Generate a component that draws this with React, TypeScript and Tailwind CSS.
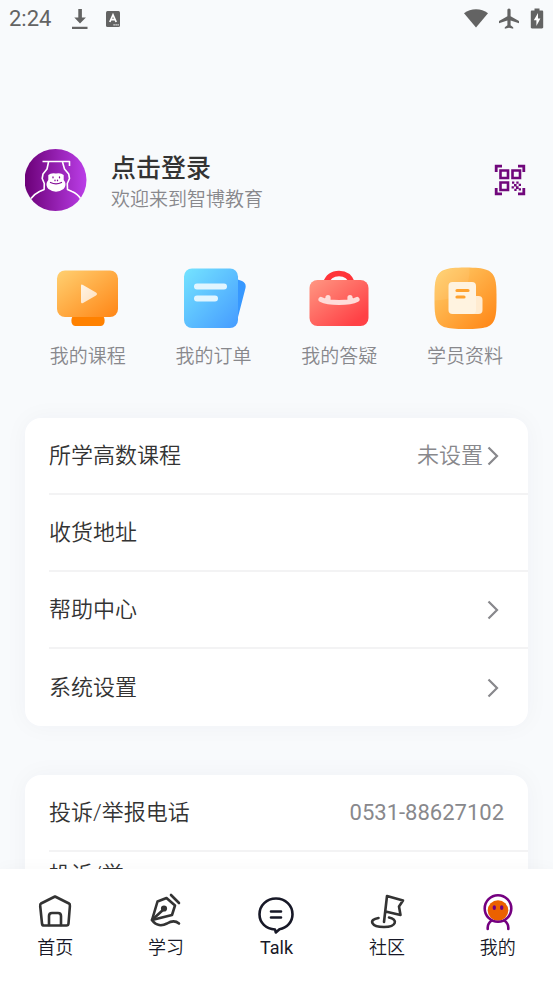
import type { ReactNode } from "react";

function StatusBar() {
  return (
    <header className="flex h-[37px] items-center justify-between px-[9px] text-[#636363]">
      <div className="flex items-center gap-5">
        <span className="font-[Roboto] text-[22px] leading-6">2:24</span>
        <div className="flex items-center gap-4">
          <svg width="18" height="22" viewBox="0 0 18 22" fill="currentColor" aria-hidden="true">
            <path d="M7.300 1h3.600v8.500h4L9 15.500 3.300 9.500h4zM1 18.700h15.500v2.200H1z" />
          </svg>
          <svg width="16" height="18" viewBox="0 0 16 18" aria-hidden="true">
            <rect x="1" y="1" width="14" height="16" rx="1.500" fill="currentColor" />
            <path d="M4.800 12 8 4.800 11.200 12M6 9.700h4" fill="none" stroke="#fff" strokeWidth="1.700" />
            <path d="M8.500 14.800h1.200m.8 0h1.200m.8 0h1.200" stroke="#fff" strokeWidth="1.200" />
          </svg>
        </div>
      </div>
      <div className="flex items-center gap-[9px]">
        <svg width="26" height="20" viewBox="0 0 26 20" fill="currentColor" aria-hidden="true">
          <path d="M12 18.500 0 4.200C3.500 1.500 7.500.3 12 .3S20.500 1.500 24 4.200z" />
        </svg>
        <svg width="22" height="22" viewBox="0 0 22 22" fill="currentColor" aria-hidden="true">
          <path d="M10 .5c1 0 1.600.8 1.600 1.700v6L20 13v2.200l-8.400-2.600v4.700l2.600 1.900v1.600L10 19.700l-4.200 1.100v-1.600l2.600-1.900v-4.700L0 15.200V13l8.400-4.800v-6C8.400 1.300 9 .5 10 .5z" />
        </svg>
        <svg width="14" height="22" viewBox="0 0 14 22" aria-hidden="true">
          <path d="M4.500.5h5v2H12c.7 0 1.200.5 1.200 1.200v15.600c0 .7-.5 1.200-1.200 1.200H2c-.7 0-1.200-.5-1.200-1.200V3.700C.8 3 1.300 2.500 2 2.500h2.500z" fill="currentColor" />
          <path d="M8 5 3.800 12.300h2.600V18l4-7.500H8z" fill="#fff" />
        </svg>
      </div>
    </header>
  );
}

function Avatar() {
  return (
    <svg className="size-[62px] shrink-0" viewBox="0 0 62 62" aria-hidden="true">
      <defs>
        <linearGradient id="avatar" x1="0" y1="0" x2="1" y2="0">
          <stop offset="0" stopColor="#6b0077" />
          <stop offset="1" stopColor="#bb3ee8" />
        </linearGradient>
      </defs>
      <circle cx="30.500" cy="31" r="31" fill="url(#avatar)" />
      <g fill="none" stroke="#fff" strokeWidth="1.600" strokeLinejoin="round">
        <path d="M17.500 12.500H44.500v4.500M23.500 13l-1.500 7-4 5-.8 4.500 2.100 5-.2 6L14.500 42.500C10.500 44.500 8 46.500 6 49.500" />
        <path d="M37.500 13l2 7 4.200 5 .8 4.500-2.200 5 .2 6 4.500 2c4 1.500 6.500 3.800 8.500 7" />
      </g>
      <path d="M23.300 26q2.700-2.500 7.700-1.500 5-1 7.700 1.500v5c2.600 3 2.200 6.500-.2 9q-7.500 5.500-15 0c-2.400-2.500-2.800-6-.2-9z" fill="#fff" />
      <g fill="none" stroke="#850d98" strokeWidth="1.300" strokeLinecap="round">
        <path d="M28 28v.8M34.500 28v.8M30 31.200v.5M32.500 31.200v.5M25.500 33.500q5.500 2.600 11 0" />
      </g>
    </svg>
  );
}

function QrIcon() {
  return (
    <svg width="32" height="32" viewBox="0 0 32 32" fill="none" stroke="#70077b" strokeWidth="2.800" aria-hidden="true">
      <path d="M2.200 8V2.200H8M24 2.200h5.800V8M2.200 24v5.800H8M24 29.800h5.800V24" />
      <path d="M6.500 6.500H14V14H6.500zM18.500 6.500H26V14h-7.500zM6.500 18.500H14V26H6.500z" strokeWidth="2.600" />
      <path d="M18 17.500h2.300v2.300H18zM22.300 17.500h2.300v2.300h-2.300zM24.700 19.800H27v2.300h-2.300zM20 20h2.600v2.600H20zM22 22.300h2.600v2.600H22zM17.600 22.300h2.300v2.300h-2.300zM24.700 24.300H27v2.300h-2.300zM20.300 24.700h2.300V27h-2.300z" fill="#70077b" stroke="none" />
    </svg>
  );
}

function CourseIcon() {
  return (
    <svg className="size-16" viewBox="0 0 64 64" aria-hidden="true">
      <defs>
        <linearGradient id="course" x1="0" y1="0" x2="1" y2="1">
          <stop offset="0" stopColor="#ffd071" />
          <stop offset="1" stopColor="#ff8515" />
        </linearGradient>
        <linearGradient id="play" x1="0" y1="0" x2="1" y2="1">
          <stop offset="0" stopColor="#fff4e5" />
          <stop offset="1" stopColor="#ffe0bd" />
        </linearGradient>
      </defs>
      <path d="M18 49h28l1.500 1.500c2 3 1.500 9.500-3 9.500h-25c-4.500 0-5-6.500-3-9.500z" fill="#ff8100" />
      <rect x="1" y="4.500" width="61" height="46.500" rx="8" fill="url(#course)" />
      <path d="M27 19 40 26.500q2 1.500 0 3L27 37q-2 1-2-1.200v-16q0-2 2-.8z" fill="url(#play)" />
    </svg>
  );
}

function OrderIcon() {
  return (
    <svg className="size-16" viewBox="0 0 64 64" aria-hidden="true">
      <defs>
        <linearGradient id="order" x1="0" y1="0" x2="1" y2="1">
          <stop offset="0.050" stopColor="#72e0ff" />
          <stop offset="1" stopColor="#459bff" />
        </linearGradient>
      </defs>
      <path d="M53 12.500 60 15q4.500 2 3.500 7l-8 31q-1 4-5 6z" fill="#3798ff" />
      <rect x="2" y="2.500" width="54" height="59.500" rx="8" fill="url(#order)" />
      <path d="M15 20.500h27M15 32.500h18" stroke="#e1f5ff" strokeWidth="6" strokeLinecap="round" />
    </svg>
  );
}

function AnswerIcon() {
  return (
    <svg className="size-16" viewBox="0 0 64 64" aria-hidden="true">
      <defs>
        <linearGradient id="answer" x1="0" y1="0" x2="1" y2="1">
          <stop offset="0" stopColor="#ff9883" />
          <stop offset="0.850" stopColor="#ff4146" />
        </linearGradient>
      </defs>
      <path d="M18.500 17.500Q22 7.500 32 7.500t13.500 10" fill="none" stroke="#ff3439" strokeWidth="5.500" />
      <rect x="2.500" y="14" width="59" height="46" rx="8" fill="url(#answer)" />
      <path d="M14 33.500q6 3 18 3t18-3M21 31.500V34M43 31.500V34" fill="none" stroke="#ffdcd9" strokeWidth="5.200" strokeLinecap="round" />
    </svg>
  );
}

function ProfileIcon() {
  return (
    <svg className="size-16" viewBox="0 0 64 64" aria-hidden="true">
      <defs>
        <linearGradient id="profile" x1="0" y1="0" x2="1" y2="1">
          <stop offset="0" stopColor="#ffd26f" />
          <stop offset="1" stopColor="#ff8312" />
        </linearGradient>
      </defs>
      <path d="M32.500 1.500c21 0 25 3 28 8s3 14 3 23 0 18-3 23-7 7.500-28 7.500-25-2.500-28-7.500-3-14-3-23 0-18 3-23 7-8 28-8z" fill="url(#profile)" />
      <path d="M1.500 34.500q37-1 35-33Q12 .5 5 9q-3.500 5-3.500 25.500z" fill="#fff" opacity="0.080" />
      <path d="M42 30h3.500q4 0 4 4v10q0 4-4 4h-9.500z" fill="#ffebd0" />
      <rect x="15.500" y="16" width="27.500" height="32" rx="4" fill="#fff3e0" />
      <path d="M24 24.500H35M24 31H31" stroke="#ffa22e" strokeWidth="3.200" strokeLinecap="round" />
    </svg>
  );
}

function Chevron() {
  return (
    <svg width="12" height="20" viewBox="0 0 12 20" fill="none" stroke="#88888c" strokeWidth="2.200" aria-hidden="true">
      <path d="M1.500 1.500 10 10l-8.500 8.500" />
    </svg>
  );
}

const shortcuts: { label: string; icon: ReactNode }[] = [
  { label: "我的课程", icon: <CourseIcon /> },
  { label: "我的订单", icon: <OrderIcon /> },
  { label: "我的答疑", icon: <AnswerIcon /> },
  { label: "学员资料", icon: <ProfileIcon /> },
];

const settings = [
  { label: "所学高数课程", value: "未设置", arrow: true },
  { label: "收货地址", value: "", arrow: false },
  { label: "帮助中心", value: "", arrow: true },
  { label: "系统设置", value: "", arrow: true },
];

function NavSvg({ children }: { children: ReactNode }) {
  return (
    <svg className="size-10 overflow-visible" viewBox="0 0 40 40" fill="none" stroke="#333" strokeWidth="2.600" strokeLinecap="round" strokeLinejoin="round" aria-hidden="true">
      {children}
    </svg>
  );
}

const tabs: { label: string; icon: ReactNode; latin?: boolean }[] = [
  {
    label: "首页",
    icon: (
      <NavSvg>
        <path d="M20 5.500 34 12.500Q35 13 34.900 15L33.500 32.500q-.2 2-2 2H9q-1.800 0-2-2L5.200 15q-.2-2 .8-2.500z" />
        <path d="M14 34V25q0-3 3-3h6q3 0 3 3v9" />
      </NavSvg>
    ),
  },
  {
    label: "学习",
    icon: (
      <NavSvg>
        <path d="M6 29 11.500 10.500 20.500 7 29 14.500 26 24z" />
        <path d="M6 29 18 18M25 4l8 8M6 29c4 6 10 6 15 3.500 5-3 9-2.500 12 0" />
        <circle cx="18" cy="17.500" r="1.800" fill="#333" />
      </NavSvg>
    ),
  },
  {
    label: "Talk",
    latin: true,
    icon: (
      <NavSvg>
        <g stroke="#171827">
          <path d="M20 7.500C10.500 7.500 3.500 14.500 3.500 23.300c0 8.500 6.500 14.700 15.500 15.200l.8 3 3.700-3.300c7.500-1.200 13-7.200 13-14.900C36.500 14.500 29.500 7.500 20 7.500z" />
          <path d="M15 20.500h10M15 26.500h10" />
        </g>
      </NavSvg>
    ),
  },
  {
    label: "社区",
    icon: (
      <NavSvg>
        <path d="M17 31 20 5l16 4.500-4 6 1.500 8.500-15-3.500M11.500 27C1 28.500 4 36 17 36s14-8 5-9.500" />
      </NavSvg>
    ),
  },
  {
    label: "我的",
    icon: (
      <NavSvg>
        <circle cx="20" cy="19.500" r="10.300" fill="#eb6100" stroke="none" />
        <g stroke="#740080">
          <circle cx="20" cy="17.500" r="13.300" />
          <path d="M9.700 38v-1.500q0-4 4-7M30.300 38v-1.500q0-4-4-7" />
        </g>
        <path d="M16.300 15.800v1.500M23.700 15.800v1.500" stroke="#740080" strokeWidth="3.200" />
      </NavSvg>
    ),
  },
];

export default function App() {
  return (
    <div className="flex h-screen flex-col overflow-hidden bg-[#f8fafc] font-[Roboto,'Noto_Sans_CJK_SC',sans-serif] text-[#333]">
      <StatusBar />
      <main className="min-h-0 flex-1 overflow-hidden px-[25px] pt-28">
        <section className="flex items-center justify-between">
          <button className="flex items-center gap-6 text-left">
            <Avatar />
            <span className="flex flex-col">
              <span className="text-[25px] leading-10 font-medium">点击登录</span>
              <span className="text-[19px] leading-[22px] font-[350] text-[#88888c]">欢迎来到智博教育</span>
            </span>
          </button>
          <button aria-label="二维码" className="mr-0.5">
            <QrIcon />
          </button>
        </section>

        <section className="mt-[55px] grid grid-cols-4">
          {shortcuts.map((item) => (
            <button key={item.label} className="flex flex-col items-center gap-3">
              {item.icon}
              <span className="text-[19px] leading-[30px] font-[350] text-[#88888c]">{item.label}</span>
            </button>
          ))}
        </section>

        <section className="mt-[46px] rounded-2xl bg-white pl-6 shadow-[0_0_25px_rgba(30,40,80,0.04)]">
          {settings.map((row) => (
            <button
              key={row.label}
              className="flex h-[77px] w-full items-center justify-between border-b-2 border-[#f3f3f4] pr-[29px] text-[22px] font-[350] last:border-b-0"
            >
              <span>{row.label}</span>
              <span className="flex items-center gap-1 text-[#88888c]">
                {row.value}
                {row.arrow && <Chevron />}
              </span>
            </button>
          ))}
        </section>

        <section className="mt-[49px] rounded-2xl bg-white pl-6 shadow-[0_0_25px_rgba(30,40,80,0.04)]">
          <div className="flex h-[77px] items-center justify-between border-b-2 border-[#f3f3f4] pr-6 text-[22px] font-[350]">
            <span>投诉/举报电话</span>
            <a href="tel:053188627102" className="font-normal text-[#88888c]">0531-88627102</a>
          </div>
          <div className="h-[77px] pt-2 text-[22px] leading-[30px] font-[350]">投诉/举</div>
        </section>
      </main>

      <nav className="relative grid h-[115px] shrink-0 grid-cols-5 bg-white pt-[22px] shadow-[0_0_16px_rgba(0,0,0,0.03)]">
        {tabs.map((tab) => (
          <button key={tab.label} className="flex flex-col items-center self-start text-lg leading-[34px] text-[#171827]">
            {tab.icon}
            <span className={tab.latin ? "font-normal" : "font-[350]"}>{tab.label}</span>
          </button>
        ))}
      </nav>
    </div>
  );
}
